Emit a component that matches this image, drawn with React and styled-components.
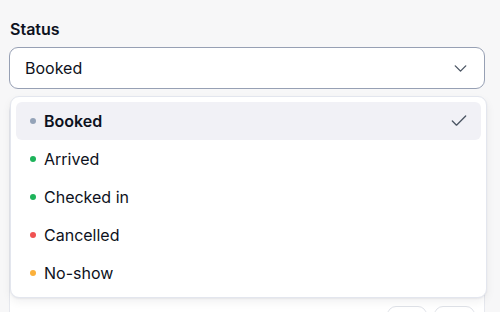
import React from "react";
import styled, { createGlobalStyle } from "styled-components";
import { ChevronDown, Check } from "lucide-react";

const Global = createGlobalStyle`
  html, body { margin: 0; padding: 0; background: #f7f7f8; }
  body { font-family: Inter, "Noto Sans", sans-serif; color: #0d1120; }
  * { box-sizing: border-box; }
`;

const Page = styled.div`
  width: 500px;
  height: 312px;
  overflow: hidden;
  padding: 17px 15px 0 9px;
  display: flex;
  flex-direction: column;
`;

const Label = styled.div`
  font-size: 16px;
  line-height: 24px;
  font-weight: 600;
  color: #0d1120;
  padding-left: 1px;
  margin-bottom: 6px;
`;

const SelectWrap = styled.div`
  position: relative;
  z-index: 2;
`;

const Trigger = styled.button`
  width: 100%;
  height: 42px;
  display: flex;
  align-items: center;
  justify-content: space-between;
  padding: 0 13px 0 15px;
  background: #ffffff;
  border: 1px solid #97a0b4;
  border-radius: 9px;
  font-family: inherit;
  font-size: 16px;
  line-height: 24px;
  font-weight: 400;
  color: #0d1120;
  cursor: pointer;
  svg { color: #4b5563; }
`;

const Menu = styled.div`
  position: absolute;
  top: calc(100% + 7px);
  left: 1px;
  width: 477px;
  padding: 5px;
  background: #ffffff;
  border: 1px solid #e3e6ee;
  border-radius: 9px;
  box-shadow: 0 4px 10px rgba(15, 23, 42, 0.06), 0 1px 2px rgba(15, 23, 42, 0.06);
  display: flex;
  flex-direction: column;
`;

const Item = styled.div`
  height: 38px;
  display: flex;
  align-items: center;
  gap: 8px;
  padding: 0 12px 0 14px;
  border-radius: 6px;
  background: ${(p) => (p.$active ? "#f1f1f6" : "transparent")};
  font-size: 16px;
  line-height: 24px;
  font-weight: ${(p) => (p.$selected ? 600 : 400)};
  color: #0d1120;
  svg { color: #4b5563; margin-left: auto; }
`;

const Dot = styled.span`
  width: 6px;
  height: 6px;
  border-radius: 50%;
  background: ${(p) => p.$color};
  flex: none;
`;

const Card = styled.div`
  margin-top: 12px;
  flex: 1;
  background: #ffffff;
  border: 1px solid #e6e8ee;
  border-bottom: none;
  border-radius: 10px 10px 0 0;
  display: flex;
  flex-direction: column;
  justify-content: flex-end;
  padding: 0 9px 0 0;
`;

const Footer = styled.div`
  display: flex;
  justify-content: flex-end;
  gap: 7px;
  margin-bottom: -26px;
`;

const SmallButton = styled.button`
  width: ${(p) => p.$w}px;
  height: 32px;
  background: #ffffff;
  border: 1px solid #dfe2e8;
  border-radius: 9px;
  font-family: inherit;
  font-size: 14px;
`;

const options = [
  { label: "Booked", color: "#94a3b8" },
  { label: "Arrived", color: "#1db35a" },
  { label: "Checked in", color: "#1db35a" },
  { label: "Cancelled", color: "#f05252" },
  { label: "No-show", color: "#fbb03b" },
];

export default function App() {
  const selected = "Booked";
  return (
    <>
      <Global />
      <Page>
        <Label>Status</Label>
        <SelectWrap>
          <Trigger>
            <span>{selected}</span>
            <ChevronDown size={21} strokeWidth={1.6} />
          </Trigger>
          <Menu>
            {options.map((o) => (
              <Item
                key={o.label}
                $active={o.label === selected}
                $selected={o.label === selected}
              >
                <Dot $color={o.color} />
                <span>{o.label}</span>
                {o.label === selected && <Check size={20} strokeWidth={1.6} />}
              </Item>
            ))}
          </Menu>
        </SelectWrap>
        <Card>
          <Footer>
            <SmallButton $w={40} />
            <SmallButton $w={41} />
          </Footer>
        </Card>
      </Page>
    </>
  );
}
